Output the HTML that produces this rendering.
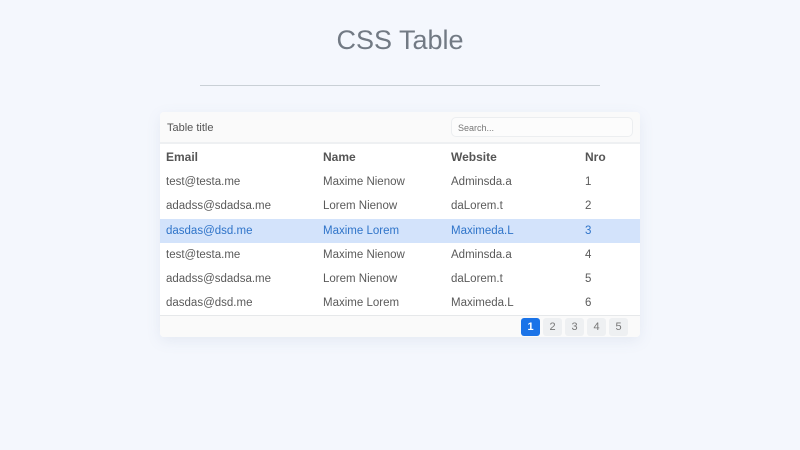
<!DOCTYPE html>
<html><head><style>
body{margin:0;width:800px;height:450px;background:#f4f7fd;font-family:"Liberation Sans",sans-serif;overflow:hidden;position:relative}
h1{position:absolute;top:25px;left:0;width:800px;text-align:center;margin:0;font-weight:normal;font-size:27px;color:#727a84}
.hr{position:absolute;top:85px;left:200px;width:400px;height:1px;background:#c9d0d6}
.card{position:absolute;left:160px;top:112px;width:480px;height:225px;background:#fff;box-shadow:0 4px 14px rgba(120,140,170,.12);border-radius:4px;overflow:hidden}
.top{height:30px;background:#fafafa;border-bottom:2px solid #eef0f2;position:relative;font-size:11px;color:#555}
.top span{position:absolute;left:7px;top:10px}
.search{position:absolute;left:291px;top:5px;width:182px;height:20px;border:1px solid #eceef0;border-radius:5px;background:#fcfcfc;font-size:9px;color:#777;box-sizing:border-box;padding:5px 6px}
.row{height:24.3px;position:relative;font-size:11.5px;color:#5a5a5a}
.row div{position:absolute;top:6px}
.c1{left:6px}.c2{left:163px}.c3{left:291px}.c4{left:425px}
.h{font-weight:bold;color:#555;font-size:12px;height:26px}
.h div{top:6px}
.sel{background:#d3e3fb;color:#2f74c9}
.foot{position:absolute;left:0;top:203px;width:480px;height:22px;background:#fafafa;border-top:1px solid #e6e8ea}
.p{position:absolute;top:2px;width:19px;height:18px;border-radius:3px;background:#eef0f2;color:#777;font-size:11px;text-align:center;line-height:18px}
</style></head><body>
<h1>CSS Table</h1><div class="hr"></div>
<div class="card">
<div class="top"><span>Table title</span><div class="search">Search...</div></div>
<div class="row h"><div class="c1">Email</div><div class="c2">Name</div><div class="c3">Website</div><div class="c4">Nro</div></div>
<div class="row"><div class="c1">test@testa.me</div><div class="c2">Maxime Nienow</div><div class="c3">Adminsda.a</div><div class="c4">1</div></div>
<div class="row"><div class="c1">adadss@sdadsa.me</div><div class="c2">Lorem Nienow</div><div class="c3">daLorem.t</div><div class="c4">2</div></div>
<div class="row sel"><div class="c1">dasdas@dsd.me</div><div class="c2">Maxime Lorem</div><div class="c3">Maximeda.L</div><div class="c4">3</div></div>
<div class="row"><div class="c1">test@testa.me</div><div class="c2">Maxime Nienow</div><div class="c3">Adminsda.a</div><div class="c4">4</div></div>
<div class="row"><div class="c1">adadss@sdadsa.me</div><div class="c2">Lorem Nienow</div><div class="c3">daLorem.t</div><div class="c4">5</div></div>
<div class="row"><div class="c1">dasdas@dsd.me</div><div class="c2">Maxime Lorem</div><div class="c3">Maximeda.L</div><div class="c4">6</div></div>
<div class="foot">
<div class="p" style="left:361px;background:#1a73e8;color:#fff;font-weight:bold">1</div>
<div class="p" style="left:383px">2</div>
<div class="p" style="left:405px">3</div>
<div class="p" style="left:427px">4</div>
<div class="p" style="left:449px">5</div>
</div>
</div>
</body></html>
